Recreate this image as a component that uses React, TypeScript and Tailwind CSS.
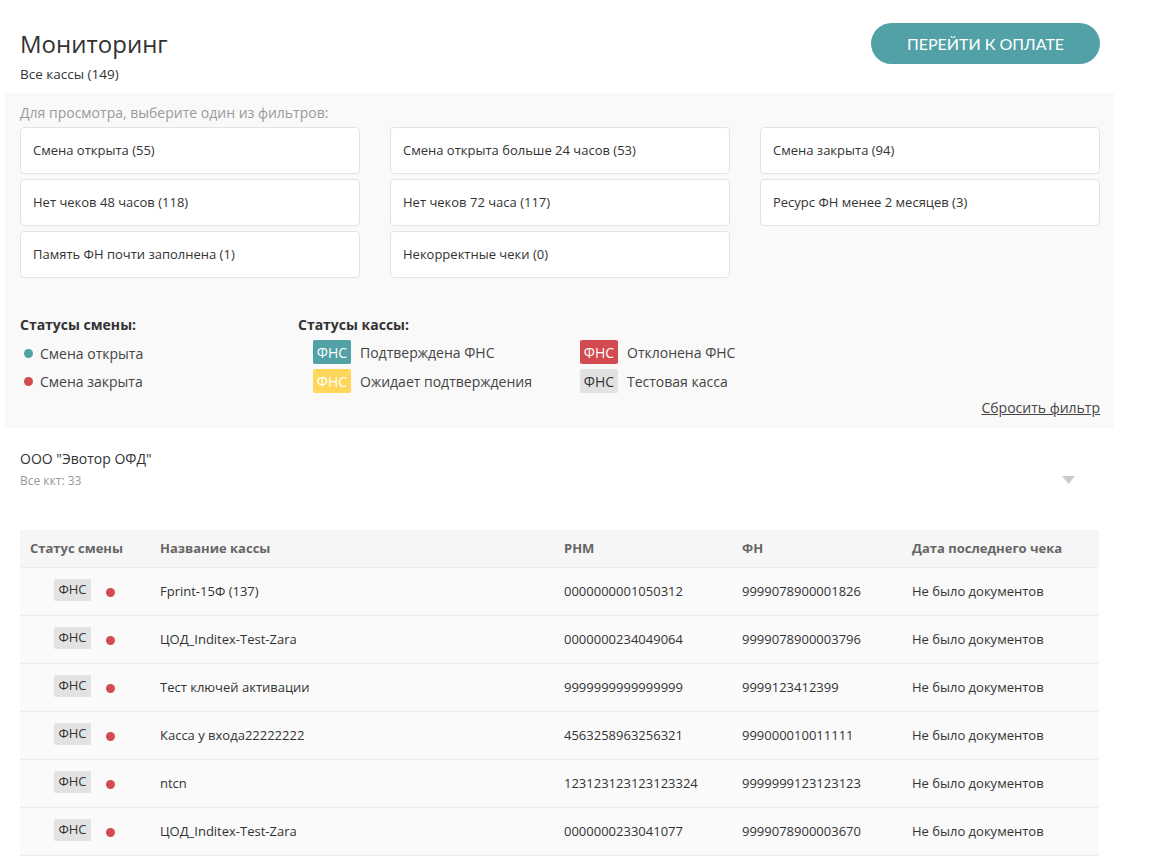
import React from "react";

const filters = [
  ["Смена открыта (55)", "Смена открыта больше 24 часов (53)", "Смена закрыта (94)"],
  ["Нет чеков 48 часов (118)", "Нет чеков 72 часа (117)", "Ресурс ФН менее 2 месяцев (3)"],
  ["Память ФН почти заполнена (1)", "Некорректные чеки (0)", null],
];

const rows = [
  ["Fprint-15Ф (137)", "0000000001050312", "9999078900001826"],
  ["ЦОД_Inditex-Test-Zara", "0000000234049064", "9999078900003796"],
  ["Тест ключей активации", "9999999999999999", "9999123412399"],
  ["Касса у входа22222222", "4563258963256321", "999000010011111"],
  ["ntcn", "123123123123123324", "9999999123123123"],
  ["ЦОД_Inditex-Test-Zara", "0000000233041077", "9999078900003670"],
];

export default function App() {
  return (
    <div
      className="w-[1152px] h-[862px] overflow-hidden bg-white text-[#333]"
      style={{ fontFamily: '"Open Sans", "Noto Sans", sans-serif' }}
    >
      {/* Header */}
      <div className="flex justify-between items-start pl-[20px] pr-[52px] pt-[23px]">
        <div>
          <h1 className="text-[24px] leading-[32px] mt-[5px] text-[#333]">Мониторинг</h1>
          <div className="text-[13.5px] mt-[5px] leading-[18px] text-[#333]">Все кассы (149)</div>
        </div>
        <button
          className="w-[229px] h-[41px] rounded-full bg-[#51a1a6] text-white text-[16px] tracking-[0px]"
          style={{ fontFamily: 'Lato, "Open Sans", sans-serif' }}
        >
          ПЕРЕЙТИ К ОПЛАТЕ
        </button>
      </div>

      {/* Filter panel */}
      <div className="mt-[10px] ml-[5px] w-[1109px] h-[335px] bg-[#f9f9f9] pl-[15px] pr-[14px] pt-[10px]">
        <div className="text-[14px] leading-[20px] text-[#9a9a9a]">Для просмотра, выберите один из фильтров:</div>
        <div className="mt-[4px] flex flex-col gap-[5px]">
          {filters.map((row, i) => (
            <div key={i} className="grid grid-cols-[340px_340px_340px] gap-x-[30px]">
              {row.map((f, j) =>
                f ? (
                  <div
                    key={j}
                    className="h-[47px] bg-white border border-[#e3e3e3] rounded-[4px] flex items-center pl-[12px] text-[13px] text-[#333]"
                  >
                    {f}
                  </div>
                ) : (
                  <div key={j} />
                )
              )}
            </div>
          ))}
        </div>

        <div className="mt-[37px] flex">
          <div className="w-[278px]">
            <div className="text-[14px] font-bold leading-[20px] text-[#333]">Статусы смены:</div>
            <div className="mt-[8px] flex items-center gap-[7px] h-[20px] pl-[4px]">
              <span className="w-[9px] h-[9px] rounded-full bg-[#4fa3a5]" />
              <span className="text-[14px] text-[#444]">Смена открыта</span>
            </div>
            <div className="mt-[8px] flex items-center gap-[7px] h-[20px] pl-[4px]">
              <span className="w-[9px] h-[9px] rounded-full bg-[#d24b50]" />
              <span className="text-[14px] text-[#444]">Смена закрыта</span>
            </div>
          </div>
          <div>
            <div className="text-[14px] font-bold leading-[20px] text-[#333]">Статусы кассы:</div>
            <div className="mt-[5px] pl-[15px] grid grid-cols-[267px_200px] gap-y-[5px]">
              <Legend color="bg-[#51a1a6] text-white" label="Подтверждена ФНС" />
              <Legend color="bg-[#d24b50] text-white" label="Отклонена ФНС" />
              <Legend color="bg-[#fdd65a] text-white" label="Ожидает подтверждения" />
              <Legend color="bg-[#e2e2e2] text-[#333]" label="Тестовая касса" />
            </div>
          </div>
        </div>
        <div className="flex justify-end mt-[5px]">
          <a className="text-[14px] underline text-[#444] leading-[20px]">Сбросить фильтр</a>
        </div>
      </div>

      {/* Org */}
      <div className="mt-[21px] pl-[20px] pr-[77px] flex justify-between items-end">
        <div>
          <div className="text-[14px] leading-[20px] text-[#333]">ООО "Эвотор ОФД"</div>
          <div className="text-[12px] leading-[18px] mt-[3px] text-[#999]">Все ккт: 33</div>
        </div>
        <svg width="13" height="9" viewBox="0 0 13 9" className="mb-[5px]">
          <polygon points="0,0 13,0 6.5,8" fill="#cccccc" />
        </svg>
      </div>

      {/* Table */}
      <div className="mt-[40px] ml-[20px] w-[1079px] text-[13px]">
        <div className="h-[38px] bg-[#f6f6f6] flex items-center font-bold text-[#666] border-b border-[#ececec]">
          <div className="w-[140px] pl-[10px]">Статус смены</div>
          <div className="w-[404px]">Название кассы</div>
          <div className="w-[178px]">РНМ</div>
          <div className="w-[170px]">ФН</div>
          <div>Дата последнего чека</div>
        </div>
        {rows.map((r, i) => (
          <div key={i} className="h-[48px] bg-[#fafafa] flex items-center border-b border-[#ececec] text-[#333] pt-[1px]">
            <div className="w-[140px] flex items-center pl-[34px]">
              <span className="w-[37px] h-[22px] bg-[#e2e2e2] rounded-[2px] flex items-center justify-center text-[13px] text-[#333] -mt-[4px]">
                ФНС
              </span>
              <span className="ml-[15px] w-[9px] h-[9px] rounded-full bg-[#d24b50]" />
            </div>
            <div className="w-[404px]">{r[0]}</div>
            <div className="w-[178px]">{r[1]}</div>
            <div className="w-[170px]">{r[2]}</div>
            <div>Не было документов</div>
          </div>
        ))}
      </div>
    </div>
  );
}

function Legend({ color, label }: { color: string; label: string }) {
  return (
    <div className="flex items-center gap-[9px] h-[24px]">
      <span className={`w-[38px] h-[24px] rounded-[2px] flex items-center justify-center text-[14px] ${color}`}>ФНС</span>
      <span className="text-[14px] text-[#444]">{label}</span>
    </div>
  );
}
